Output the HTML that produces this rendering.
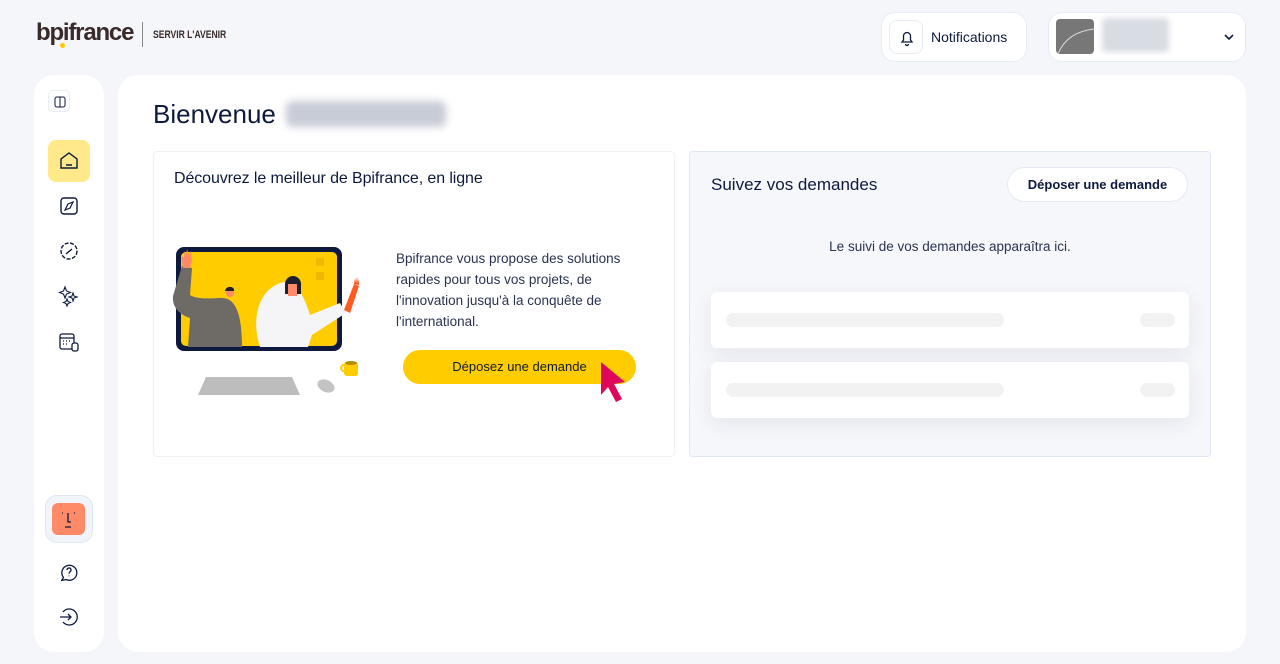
<!DOCTYPE html>
<html><head><meta charset="utf-8"><style>
*{box-sizing:border-box;margin:0;padding:0}
body{width:1280px;height:664px;background:#f4f6fa;font-family:"Liberation Sans",sans-serif;color:#0d1a3d;position:relative;overflow:hidden}
.abs{position:absolute}
.card{background:#fff;border-radius:20px}
svg{display:block}
</style></head><body>
<div class="abs" style="left:36px;top:19px;font-size:24px;font-weight:bold;color:#3a2a2a;letter-spacing:-1.2px">bpifrance</div>
<div class="abs" style="left:60px;top:43px;width:5px;height:5px;border-radius:50%;background:#ffc800"></div>
<div class="abs" style="left:142px;top:22px;width:1px;height:25px;background:#888"></div>
<div class="abs" style="left:153px;top:29px;font-size:11px;font-weight:bold;color:#3a2a2a;transform:scaleX(0.78);transform-origin:left">SERVIR L'AVENIR</div>

<div class="abs" style="left:881px;top:12px;width:146px;height:50px;background:#fff;border:1px solid #e6ecf7;border-radius:14px"></div>
<div class="abs" style="left:889px;top:20px;width:34px;height:34px;border:1px solid #e6ecf7;border-radius:8px;background:#fff"><svg width="34" height="34" viewBox="0 0 34 34"><path d="M12 21h10l-1.5-2v-4a3.5 3.5 0 0 0-7 0v4z M15.5 23a1.5 1.5 0 0 0 3 0" fill="none" stroke="#0d1a3d" stroke-width="1.3"/></svg></div>
<div class="abs" style="left:931px;top:29px;font-size:14px">Notifications</div>
<div class="abs" style="left:1048px;top:12px;width:198px;height:50px;background:#fff;border:1px solid #e6ecf7;border-radius:14px"></div>
<div class="abs" style="left:1056px;top:19px;width:38px;height:35px;background:#777;border-radius:4px;overflow:hidden"><svg width="38" height="35"><path d="M2 35C8 20 20 12 38 10" fill="none" stroke="#ddd" stroke-width="1"/></svg></div>
<div class="abs" style="left:1102px;top:18px;width:67px;height:34px;background:#d8dce3;border-radius:4px;filter:blur(3px)"></div>
<svg class="abs" style="left:1223px;top:33px" width="12" height="8"><path d="M2 2l4 4 4-4" fill="none" stroke="#0d1a3d" stroke-width="1.6"/></svg>

<div class="abs card" style="left:34px;top:75px;width:70px;height:577px"></div>
<div class="abs" style="left:48px;top:90px;width:22px;height:22px;border:1px solid #e6ecf7;border-radius:5px"><svg width="22" height="22"><rect x="6" y="6" width="10" height="10" rx="2" fill="none" stroke="#0d1a3d" stroke-width="1"/><path d="M11 6v10" stroke="#0d1a3d"/></svg></div>
<div class="abs" style="left:48px;top:140px;width:42px;height:42px;background:#ffe98a;border-radius:8px"><svg width="42" height="42"><path d="M13 28V19l8-6 8 6v9z M18 25h6" fill="none" stroke="#0d1a3d" stroke-width="1.4"/></svg></div>
<svg class="abs" style="left:58px;top:195px" width="22" height="22"><rect x="3" y="3" width="16" height="16" rx="3" fill="none" stroke="#0d1a3d" stroke-width="1.4"/><path d="M7 15l3-6 5-2-3 6z" fill="none" stroke="#0d1a3d" stroke-width="1.2"/></svg>
<svg class="abs" style="left:58px;top:240px" width="22" height="22"><circle cx="11" cy="11" r="8" fill="none" stroke="#0d1a3d" stroke-width="1.4" stroke-dasharray="4 1.5"/><path d="M8 14l6-5" stroke="#0d1a3d" stroke-width="1.4"/></svg>
<svg class="abs" style="left:58px;top:285px" width="22" height="22"><path d="M7 2l1.5 4 4 1.5-4 1.5L7 13 5.5 9 1.5 7.5l4-1.5zM15 8l1 3 3 1-3 1-1 3-1-3-3-1 3-1zM9 14l1 2.5 2.5 1-2.5 1-1 2.5-1-2.5-2.5-1 2.5-1z" fill="none" stroke="#0d1a3d" stroke-width="1.1"/></svg>
<svg class="abs" style="left:58px;top:331px" width="22" height="22"><rect x="2" y="3" width="14" height="15" rx="2" fill="none" stroke="#0d1a3d" stroke-width="1.3"/><path d="M2 7h14M5 10h1M8 10h1M11 10h1M5 13h1M8 13h1" stroke="#0d1a3d" stroke-width="1.3"/><rect x="14" y="12" width="6" height="8" rx="2" fill="#fff" stroke="#0d1a3d" stroke-width="1.3"/></svg>
<div class="abs" style="left:45px;top:495px;width:48px;height:48px;background:#f1f4fa;border:1px solid #e0e7f4;border-radius:12px"></div>
<div class="abs" style="left:52px;top:503px;width:33px;height:32px;background:#ff8a68;border-radius:6px"><svg width="33" height="32"><path d="M10 10h1M22 10h1M16 10v9h3M13 24h6" stroke="#0d1a3d" stroke-width="1.3" fill="none"/></svg></div>
<svg class="abs" style="left:58px;top:561px" width="22" height="22"><path d="M5.5 16.5A7.5 7.5 0 1 1 8 18.5L3.5 19.5z" fill="none" stroke="#0d1a3d" stroke-width="1.3" stroke-linejoin="round"/><path d="M9 9a2 2 0 1 1 3 1.7c-1 .6-1 1-1 2M11 14.6v.6" fill="none" stroke="#0d1a3d" stroke-width="1.3"/></svg>
<svg class="abs" style="left:58px;top:606px" width="22" height="22"><path d="M5 6a8 8 0 1 1 0 10" fill="none" stroke="#0d1a3d" stroke-width="1.3"/><path d="M2 11h11M10 8l3 3-3 3" fill="none" stroke="#0d1a3d" stroke-width="1.3"/></svg>

<div class="abs card" style="left:118px;top:75px;width:1128px;height:577px"></div>
<div class="abs" style="left:153px;top:99px;font-size:26px;color:#0d1a3d">Bienvenue</div>
<div class="abs" style="left:286px;top:101px;width:160px;height:26px;background:#c8ccd6;border-radius:6px;filter:blur(4px)"></div>

<div class="abs" style="left:153px;top:151px;width:522px;height:306px;background:#fff;border:1px solid #eef1f6;border-radius:4px"></div>
<div class="abs" style="left:174px;top:170px;font-size:16px;letter-spacing:-0.1px">Découvrez le meilleur de Bpifrance, en ligne</div>
<svg class="abs" style="left:168px;top:240px" width="200" height="160">
<rect x="8" y="7" width="166" height="104" rx="8" fill="#0d1a3d"/>
<rect x="13" y="12" width="156" height="94" rx="5" fill="#ffcc00"/>
<rect x="148" y="18" width="8" height="8" fill="#f0b800"/><rect x="148" y="32" width="8" height="8" fill="#f0b800"/>
<path d="M20 107L22 78C10 74 4 66 5 56L14 26L24 28L22 55C30 60 44 58 54 58C68 58 74 75 74 107z" fill="#6e6a66"/>
<path d="M15 28l-2-11 3 0 0-6 2 5 1-7 2 7 2-5 1 10-2 7z" fill="#ff8a68"/>
<circle cx="62" cy="53" r="4" fill="#ff8a68"/><path d="M57 51a5 5 0 0 1 9-2l0 2z" fill="#1e1e2e"/>
<path d="M92 107c-10-30 0-60 24-65 15 0 22 20 26 33l30-12 6 10-34 22-4 12z" fill="#f5f4f6"/>
<path d="M117 44a8 8 0 0 1 16 0v10h-16z" fill="#1e1e2e"/><rect x="120" y="44" width="9" height="12" fill="#ff8a68"/>
<path d="M176 70l10-26 5 2-9 27z" fill="#ff5a1f"/>
<path d="M186 44l1-6 1 5 1-6 1 6 1-4 0 6z" fill="#ff5a1f"/>
<path d="M30 155l8-18h86l8 18z" fill="#bdbdbd"/>
<ellipse cx="158" cy="146" rx="9" ry="6" fill="#c4c4c4" transform="rotate(25 158 146)"/>
<rect x="176" y="122" width="14" height="14" rx="3" fill="#ffcc00"/><circle cx="176" cy="128" r="3" fill="none" stroke="#ffcc00" stroke-width="2"/><ellipse cx="183" cy="123" rx="6" ry="2" fill="#b88a00"/>
</svg>
<div class="abs" style="left:396px;top:248px;width:250px;font-size:13.5px;line-height:21px;color:#2a3350">Bpifrance vous propose des solutions rapides pour tous vos projets, de l'innovation jusqu'à la conquête de l'international.</div>
<div class="abs" style="left:403px;top:350px;width:233px;height:34px;background:#ffcc00;border-radius:17px;font-size:13px;line-height:34px;text-align:center">Déposez une demande</div>
<svg class="abs" style="left:597px;top:360px" width="32" height="50"><path d="M4 2l24 20-11 2 8 15-6 3-8-15-7 8z" fill="#e0075a"/></svg>

<div class="abs" style="left:689px;top:151px;width:522px;height:306px;background:#f6f7fb;border:1.5px solid #dfe7f6;border-radius:4px"></div>
<div class="abs" style="left:711px;top:175px;font-size:17px">Suivez vos demandes</div>
<div class="abs" style="left:1007px;top:167px;width:181px;height:35px;background:#fff;border:1px solid #e3e9f5;border-radius:18px;font-size:13px;font-weight:bold;line-height:33px;text-align:center">Déposer une demande</div>
<div class="abs" style="left:690px;top:239px;width:520px;text-align:center;font-size:13.5px;color:#2a3350">Le suivi de vos demandes apparaîtra ici.</div>
<div class="abs" style="left:711px;top:292px;width:478px;height:56px;background:#fff;border-radius:6px;box-shadow:0 6px 20px rgba(30,40,80,0.08)"><div class="abs" style="left:15px;top:21px;width:278px;height:14px;background:#f2f2f2;border-radius:7px"></div><div class="abs" style="left:429px;top:21px;width:35px;height:14px;background:#f2f2f2;border-radius:7px"></div></div>
<div class="abs" style="left:711px;top:362px;width:478px;height:56px;background:#fff;border-radius:6px;box-shadow:0 6px 20px rgba(30,40,80,0.08)"><div class="abs" style="left:15px;top:21px;width:278px;height:14px;background:#f2f2f2;border-radius:7px"></div><div class="abs" style="left:429px;top:21px;width:35px;height:14px;background:#f2f2f2;border-radius:7px"></div></div>
</body></html>
